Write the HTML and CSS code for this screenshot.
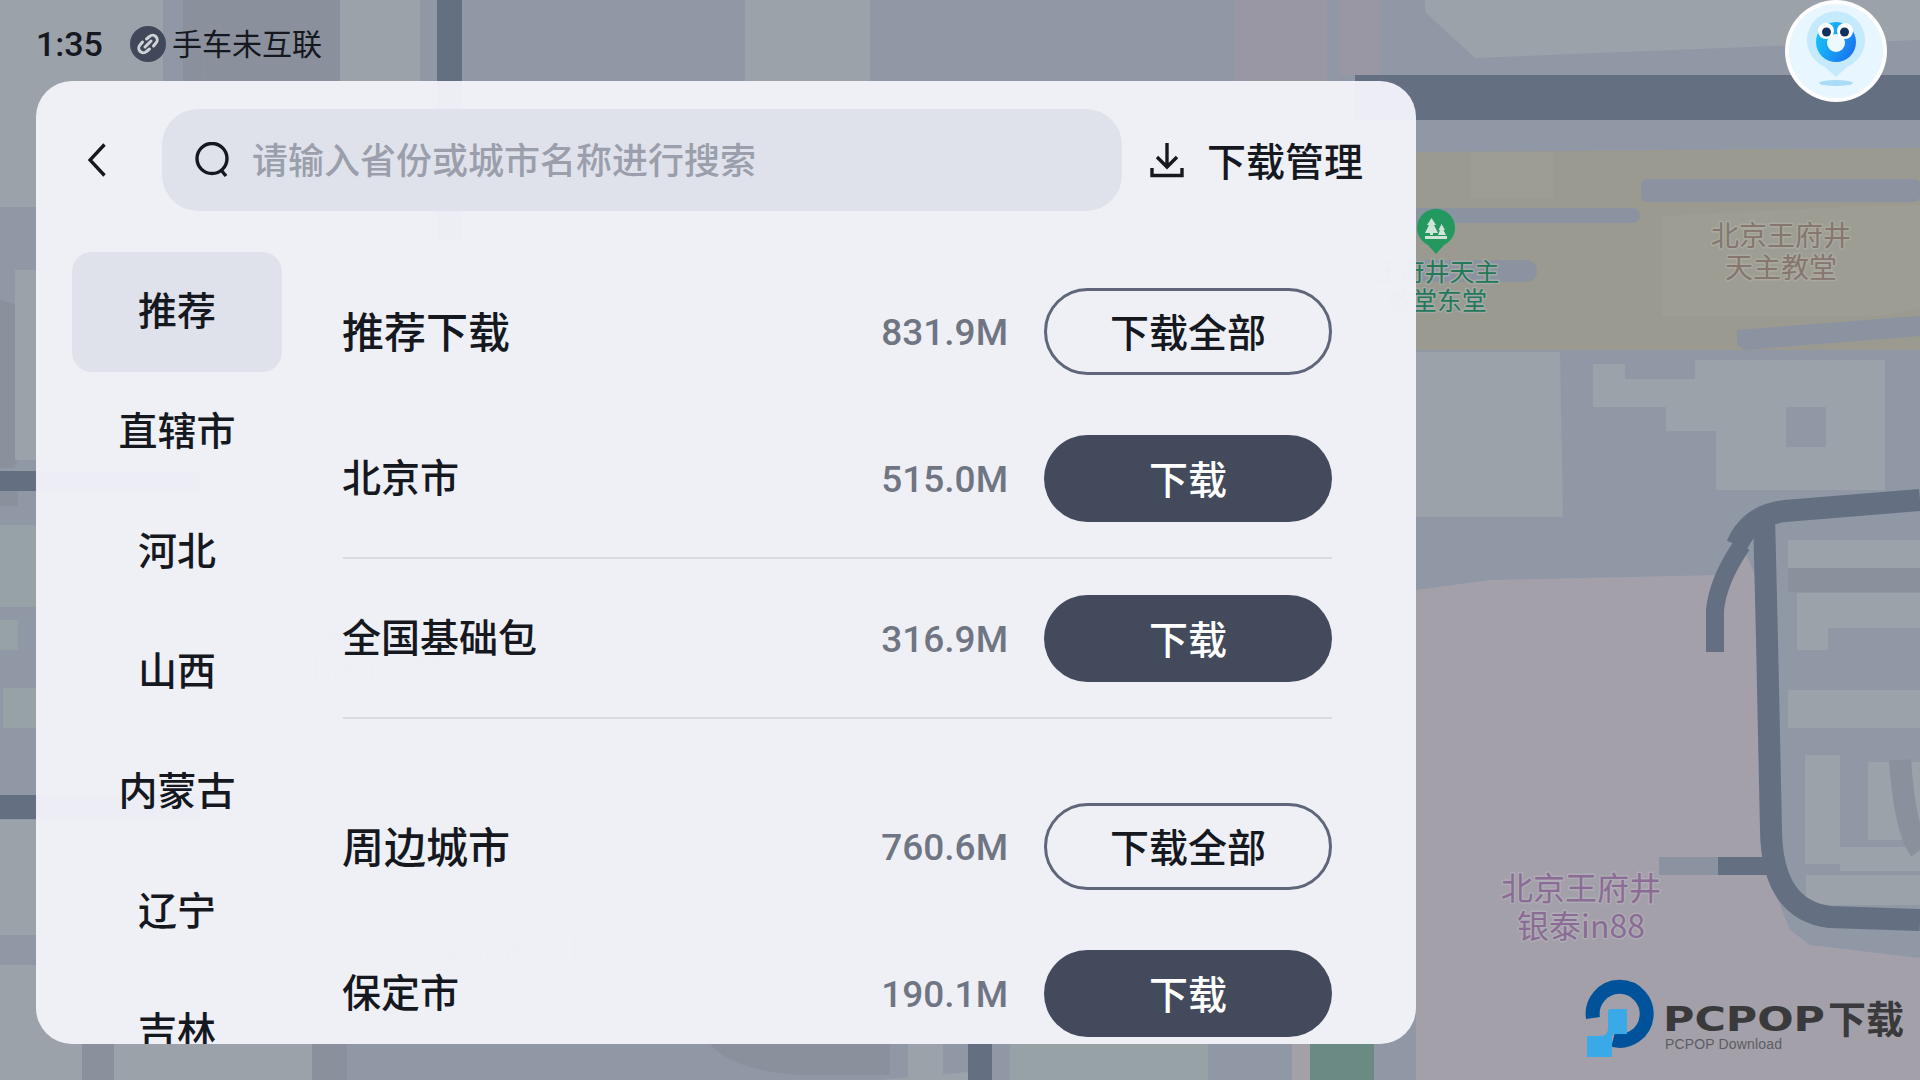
FILE: index.html
```html
<!DOCTYPE html>
<html lang="zh-CN">
<head>
<meta charset="utf-8">
<title>离线地图下载</title>
<link rel="stylesheet" href="styles.css">
</head>
<body>
<div class="screen">
  <svg class="map" viewBox="0 0 1920 1080" aria-hidden="true">
    <rect class="base" width="1920" height="1080"/>
    <!-- left edge -->
    <rect class="light" x="0" y="0" width="163" height="207"/>
    <rect class="mid" x="183" y="0" width="20" height="232"/>
    <polygon class="mid" points="203,0 340,0 340,190 230,225 205,240"/>
    <polygon class="mid" points="0,300 18,305 28,440 14,468 0,468"/>
    <rect class="light" x="15" y="270" width="110" height="190"/>
    <rect class="road" x="0" y="471" width="200" height="20"/>
    <rect class="mid" x="0" y="491" width="18" height="15"/>
    <rect class="green" x="0" y="525" width="120" height="82"/>
    <rect class="green" x="0" y="620" width="18" height="30"/>
    <rect class="green" x="3" y="688" width="120" height="40"/>
    <rect class="road" x="0" y="795" width="200" height="24"/>
    <rect class="light" x="0" y="820" width="90" height="115"/>
    <rect class="light" x="0" y="965" width="90" height="115"/>
    <!-- top -->
    <rect class="light" x="340" y="0" width="80" height="160"/>
    <rect class="road" x="437" y="0" width="25" height="240"/>
    <rect class="light" x="500" y="120" width="165" height="120"/>
    <rect class="light" x="745" y="0" width="125" height="135"/>
    <polygon class="light" points="987,103 1187,95 1190,240 987,240"/>
    <rect class="pink-dim" x="1235" y="0" width="92" height="240"/>
    <rect class="pink-dim" x="1340" y="0" width="40" height="75"/>
    <polygon class="light" points="1425,0 1920,0 1920,40 1475,58 1425,12"/>
    <rect class="road" x="1355" y="75" width="565" height="45"/>
    <!-- tan campus -->
    <polygon class="tan" points="1416,152 1920,148 1920,350 1416,350"/>
    <rect class="tan2" x="1471" y="152" width="82" height="46"/>
    <polygon class="tan2" points="1662,216 1880,205 1920,205 1920,308 1885,316 1662,316"/>
    <rect class="pale" x="1641" y="179" width="279" height="23" rx="6"/>
    <rect class="pale" x="1400" y="208" width="240" height="15" rx="7"/>
    <rect class="pale" x="1400" y="260" width="137" height="22" rx="10"/>
    <polygon class="pale" points="1737,330 1920,316 1920,336 1745,350 1737,345"/>
    <!-- buildings right -->
    <polygon class="light" points="1416,352 1560,352 1563,517 1416,517"/>
    <polygon class="light" points="1593,364 1625,364 1625,379 1695,379 1695,360 1885,360 1885,490 1716,490 1716,431 1666,431 1666,407 1593,407"/>
    <rect class="base" x="1786" y="407" width="40" height="40"/>
    <rect class="light" x="1788" y="540" width="132" height="28"/>
    <rect class="mid" x="1788" y="568" width="132" height="24"/>
    <rect class="light" x="1797" y="593" width="123" height="35"/>
    <rect class="light" x="1797" y="628" width="31" height="22"/>
    <rect class="light" x="1788" y="690" width="132" height="38"/>
    <rect class="light" x="1805" y="755" width="35" height="109"/>
    <rect class="light" x="1868" y="762" width="52" height="78"/>
    <rect class="light" x="1840" y="847" width="80" height="24"/>
    <rect class="light" x="1806" y="875" width="114" height="30"/>
    <path class="mid-line" d="M1900,760 Q1905,830 1920,850" />
    <!-- pink block -->
    <polygon class="pink" points="1416,590 1490,580 1720,575 1740,540 1755,575 1770,880 1790,930 1810,945 1920,958 1920,1080 1416,1080"/>
    <rect class="pale" x="1659" y="857" width="60" height="18"/>
    <!-- road -->
    <path class="road-line road-thin" d="M1715,652 L1715,610 Q1718,580 1742,545"/>
    <path class="road-line" d="M1737,545 Q1750,515 1785,511 L1920,500"/>
    <path class="road-line" d="M1764,515 L1767,640 L1771,830 Q1772,910 1830,917 L1920,920"/>
    <path class="road-line road-thin" d="M1718,866 L1775,866"/>
    <!-- bottom -->
    <rect class="light" x="0" y="1044" width="320" height="36"/>
    <rect class="mid" x="82" y="1044" width="32" height="36"/>
    <rect class="mid" x="312" y="1044" width="35" height="36"/>
    <path class="mid" d="M710,1044 L890,1044 L890,1075 L800,1075 Q730,1070 710,1044 Z"/>
    <rect class="light" x="908" y="1044" width="35" height="34"/>
    <rect class="road" x="968" y="1044" width="24" height="36"/>
    <polygon class="light" points="880,1080 968,1072 968,1080"/>
    <rect class="green" x="1010" y="1044" width="198" height="36"/>
    <rect class="pink" x="1292" y="1044" width="20" height="36"/>
    <rect class="teal" x="1310" y="1044" width="64" height="36"/>
    <!-- labels -->
    <text class="label label-green" text-anchor="middle" x="1437" y="281">王府井天主</text>
    <text class="label label-green" text-anchor="middle" x="1437" y="310">教堂东堂</text>
    <text class="label label-brown" text-anchor="middle" x="1781" y="246">北京王府井</text>
    <text class="label label-brown" text-anchor="middle" x="1781" y="278">天主教堂</text>
    <text class="label label-purple" text-anchor="middle" x="1581" y="900">北京王府井</text>
    <text class="label label-purple" text-anchor="middle" x="1581" y="938">银泰in88</text>
    <text class="label label-ghost" x="299" y="682">小区13号院</text>
    <text class="label label-ghost" x="316" y="644">锡</text>
    <text class="label label-ghost" x="430" y="963">锡拉胡同小区</text>
    <!-- poi marker -->
    <path class="poi" d="M1436,254 L1428,245 A19,19 0 1 1 1444,245 Z"/>
    <path class="poi-tree" d="M1431.5,218 L1436,225 L1434,225 L1438,233 H1433 V235 H1430 V233 H1425 L1429,225 L1427,225 Z M1441.5,224 L1445,230 L1443.5,230 L1446,235 H1438 L1440,230 L1438.5,230 Z M1425,236 H1447 V239 H1425 Z"/>
  </svg>

  <header class="status">
    <span class="clock">1:35</span>
    <span class="link-icon">
      <svg viewBox="0 0 36 36" width="36" height="36">
        <circle class="link-disc" cx="18" cy="18" r="18"/>
        <path class="link-stroke" d="M16.5 13 L19.5 10.5 A4.6 4.6 0 0 1 26 17 L23.5 20 M19.5 23 L16.5 25.5 A4.6 4.6 0 0 1 10 19 L12.5 16 M15 21 L21 15"/>
      </svg>
    </span>
    <span class="link-text">手车未互联</span>
  </header>

  <main class="panel">
    <div class="topbar">
      <button class="back" aria-label="返回">
        <svg viewBox="0 0 18 34" width="18" height="34"><path class="ico" d="M16.5 1.5 L2 17 L16.5 32.5"/></svg>
      </button>
      <div class="search">
        <svg viewBox="0 0 36 36" width="36" height="36"><circle class="ico" cx="17" cy="16.5" r="15"/><path class="ico" d="M26 28 L31 34"/></svg>
        <span class="placeholder">请输入省份或城市名称进行搜索</span>
      </div>
      <div class="manage">
        <svg viewBox="0 0 34 36" width="34" height="36"><path class="ico" d="M17 1 V24 M7 15 L17 25 L27 15 M2 26 V33.5 H32 V26"/></svg>
        <span class="manage-text">下载管理</span>
      </div>
    </div>
    <div class="content">
      <nav class="nav">
        <div class="nav-item active">推荐</div>
        <div class="nav-item">直辖市</div>
        <div class="nav-item">河北</div>
        <div class="nav-item">山西</div>
        <div class="nav-item">内蒙古</div>
        <div class="nav-item">辽宁</div>
        <div class="nav-item">吉林</div>
      </nav>
      <div class="list">
        <section class="group">
          <div class="row head"><span class="name">推荐下载</span><span class="size">831.9M</span><button class="btn outline">下载全部</button></div>
          <div class="row line"><span class="name">北京市</span><span class="size">515.0M</span><button class="btn solid">下载</button></div>
          <div class="row line"><span class="name">全国基础包</span><span class="size">316.9M</span><button class="btn solid">下载</button></div>
        </section>
        <section class="group">
          <div class="row head"><span class="name">周边城市</span><span class="size">760.6M</span><button class="btn outline">下载全部</button></div>
          <div class="row line"><span class="name">保定市</span><span class="size">190.1M</span><button class="btn solid">下载</button></div>
        </section>
      </div>
    </div>
  </main>

  <div class="avatar">
    <svg viewBox="0 0 102 102" width="102" height="102">
      <defs>
        <linearGradient id="body" x1="0" y1="0.3" x2="1" y2="0.8">
          <stop offset="0" stop-color="#17c5f7"/><stop offset="1" stop-color="#1a6ff0"/>
        </linearGradient>
      </defs>
      <circle cx="51" cy="51" r="51" fill="#fff"/>
      <circle cx="51" cy="51" r="47" fill="#e8f6ff"/>
      <path d="M51 77 L40 67 A29 29 0 1 1 62 67 Z" fill="#c5e9fd"/>
      <circle cx="51" cy="42" r="20" fill="url(#body)"/>
      <circle cx="51" cy="43" r="9" fill="#eef8ff"/>
      <circle cx="41" cy="31" r="8" fill="#fff"/>
      <circle cx="60" cy="31" r="8" fill="#fff"/>
      <circle cx="41.5" cy="32" r="4.5" fill="#14305c"/>
      <circle cx="59.5" cy="32" r="4.5" fill="#14305c"/>
      <ellipse cx="51" cy="83" rx="17" ry="3" fill="#aadcfa"/>
    </svg>
  </div>

  <div class="watermark">
    <svg viewBox="0 0 340 100" width="340" height="100">
      <path class="wm-ring" d="M13 48 A27 27 0 1 1 33 70" />
      <path class="wm-cube" d="M31 39 H47 V64 H36 Q32 64 32 68 V87 H7 V66 H20 Q28 66 28 58 V42 Q28 39 31 39 Z"/>
      <text class="wm-title" x="83" y="61" textLength="162" lengthAdjust="spacingAndGlyphs">PCPOP</text>
      <text class="wm-cn" x="248" y="63">下载</text>
      <text class="wm-sub" x="85" y="79" textLength="117" lengthAdjust="spacing">PCPOP Download</text>
    </svg>
  </div>
</div>
</body>
</html>
```

FILE: styles.css
```css
* { box-sizing: border-box; }
html, body { margin: 0; padding: 0; }
body {
  font-family: "Noto Sans CJK SC", "Noto Sans", sans-serif;
  color: #15181f;
}
.screen {
  position: relative;
  width: 1920px;
  height: 1080px;
  overflow: hidden;
  display: flex;
  flex-direction: column;
  align-items: flex-start;
}

/* map canvas */
.map { position: absolute; left: 0; top: 0; width: 1920px; height: 1080px; }
.base { fill: #9098a6; }
.light { fill: #9ba2a9; }
.mid { fill: #8a909c; }
.green { fill: #97a2a6; }
.pale { fill: #8b93a1; }
.road { fill: #656f82; }
.tan { fill: #9a9a90; }
.tan2 { fill: #9d9d94; }
.pink { fill: #a3a0aa; }
.pink-dim { fill: #9a97a4; }
.teal { fill: #6a8a83; }
.road-line { fill: none; stroke: #656f82; stroke-width: 22; }
.road-thin { stroke-width: 18; }
.mid-line { fill: none; stroke: #8a909c; stroke-width: 22; }
.label {
  font-family: "Noto Sans CJK SC", sans-serif;
  paint-order: stroke;
  stroke-width: 3px;
  stroke-linejoin: round;
}
.label-green { font-size: 25px; fill: #23795a; stroke: #a5a8a4; }
.label-brown { font-size: 28px; fill: #85766f; stroke: #a9a9a0; }
.label-purple { font-size: 32px; fill: #8b6c94; stroke: #aeacb4; }
.label-ghost { font-size: 32px; fill: #7a8292; stroke: none; }
.poi { fill: #23985f; }
.poi-tree { fill: #cfe3d6; }

/* status bar */
.status {
  position: relative;
  height: 81px;
  padding: 7px 0 0 36px;
  display: flex;
  align-items: center;
}
.clock {
  font-family: Roboto, sans-serif;
  font-weight: 500;
  font-size: 34px;
  color: #15181f;
  width: 94px;
}
.link-icon { display: flex; width: 42px; }
.link-disc { fill: #40485a; }
.link-stroke { fill: none; stroke: #cfd3d6; stroke-width: 3; stroke-linecap: round; }
.link-text { font-size: 30px; line-height: 40px; color: #15181f; padding-bottom: 5px; }

/* panel */
.panel {
  position: relative;
  margin-left: 36px;
  width: 1380px;
  height: 963px;
  border-radius: 36px;
  background: rgba(242, 243, 249, 0.97);
  overflow: hidden;
  display: flex;
  flex-direction: column;
}
.topbar {
  flex: none;
  display: flex;
  align-items: center;
  height: 102px;
  margin-top: 28px;
}
.back {
  appearance: none;
  border: 0;
  background: none;
  padding: 0;
  margin-left: 52px;
  width: 74px;
  height: 34px;
  display: flex;
  justify-content: flex-start;
}
.ico { fill: none; stroke: #15181f; stroke-width: 3.4; }
.search {
  width: 960px;
  height: 102px;
  border-radius: 36px;
  background: #dfe2ea;
  display: flex;
  align-items: center;
  gap: 21px;
  padding-left: 33px;
}
.placeholder { font-size: 36px; font-weight: 500; color: #9a9fab; line-height: 48px; padding-bottom: 4px; }
.manage {
  margin-left: 28px;
  display: flex;
  align-items: center;
  gap: 23px;
  font-size: 39px;
  font-weight: 500;
  line-height: 52px;
}
.manage-text { padding-bottom: 3px; }
.content { flex: 1; min-height: 0; display: flex; margin-top: 41px; }
.nav { flex: none; width: 210px; margin-left: 36px; }
.nav-item {
  height: 120px;
  border-radius: 20px;
  display: flex;
  align-items: center;
  justify-content: center;
  font-size: 39px;
  font-weight: 500;
  padding-bottom: 8px;
}
.nav-item.active { background: #dfe2ea; }
.list { flex: none; width: 989px; margin-left: 61px; padding-top: 13px; }
.group { margin-bottom: 61px; }
.row { display: flex; align-items: center; }
.head { height: 132px; margin-bottom: 2px; }
.group:last-child .head { margin-bottom: 1px; }
.line { height: 160px; border-bottom: 2px solid #d8dbe2; }
.group:last-child .line { border-bottom: 0; }
.name { flex: 1; margin-left: -1px; font-size: 39px; font-weight: 500; line-height: 52px; padding-bottom: 6px; }
.head .name { font-size: 42px; padding-bottom: 2px; }
.size {
  font-family: Roboto, sans-serif;
  font-weight: 500;
  font-size: 37px;
  color: #6f7582;
  margin-right: 36px;
  padding-top: 2px;
}
.btn {
  appearance: none;
  flex: none;
  width: 288px;
  height: 87px;
  border-radius: 44px;
  font-family: inherit;
  font-size: 39px;
  font-weight: 500;
  padding: 0 0 2px;
}
.outline { background: transparent; border: 3px solid #5f6679; color: #15181f; }
.solid { background: #434a5b; border: 0; color: #fff; }

/* overlays */
.avatar { position: absolute; left: 1785px; top: 0; display: flex; }
.watermark { position: absolute; left: 1580px; top: 970px; display: flex; }
.wm-ring { fill: none; stroke: #00539b; stroke-width: 14; }
.wm-cube { fill: #3aa9e8; }
.wm-title { font-family: "DejaVu Sans", sans-serif; font-weight: 700; font-size: 33px; fill: #3a3a3c; }
.wm-cn { font-family: "Noto Sans CJK SC", sans-serif; font-weight: 700; font-size: 38px; fill: #3a3a3c; }
.wm-sub { font-family: "Liberation Sans", sans-serif; font-size: 14px; fill: #5d5d63; }
```
